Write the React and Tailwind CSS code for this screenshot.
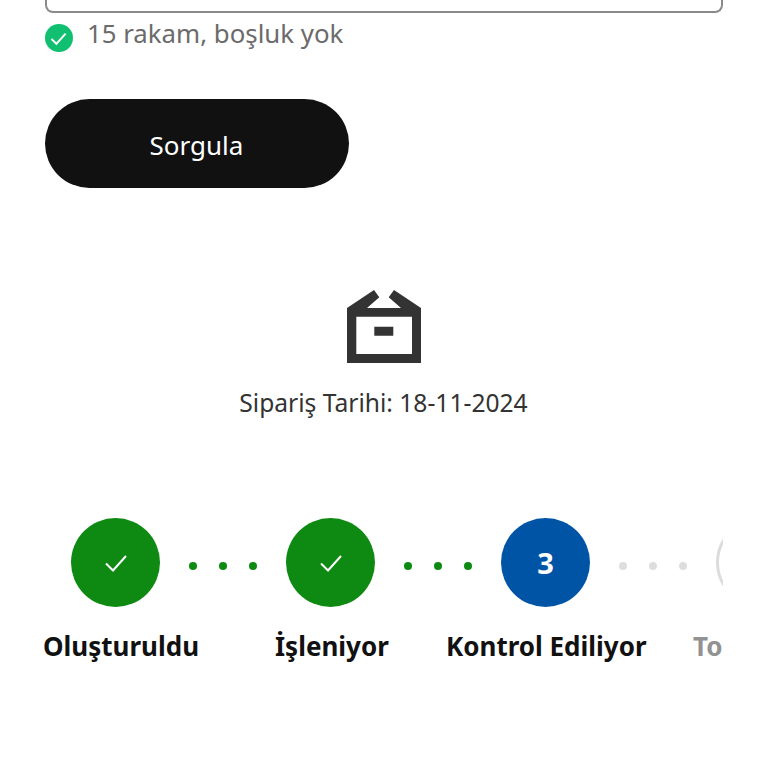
import React from 'react';

const FONT = { fontFamily: '"Noto Sans", sans-serif' };

const Check = ({ className, weight = 2 }) => (
  <svg className={className} viewBox="0 0 24 24" fill="none" stroke="currentColor" strokeWidth={weight}>
    <path d="M2 12.5l7 7L22 5" />
  </svg>
);

const Dots = ({ color }) => (
  <div className="w-[126px] shrink-0 flex items-center justify-center gap-[22px] pt-[7px]">
    <span className={`w-[8px] h-[8px] rounded-full ${color}`} />
    <span className={`w-[8px] h-[8px] rounded-full ${color}`} />
    <span className={`w-[8px] h-[8px] rounded-full ${color}`} />
  </div>
);

const DoneCircle = () => (
  <div className="w-[89px] h-[89px] shrink-0 rounded-full bg-[#0e8a12] text-white flex items-center justify-center">
    <Check className="w-[24px] h-[24px]" />
  </div>
);

export default function App() {
  return (
    <div className="min-h-[768px] bg-white" style={FONT}>
      <div className="pl-[44.5px]">
        {/* Input, only its lower edge is in view */}
        <div className="h-[13px] border-x-2 border-b-2 border-[#8a8a8a] rounded-b-[8px] w-[678px]" />

        <div className="flex items-start mt-[6px]">
          <div className="w-[28px] h-[28px] mt-[5px] rounded-full bg-[#10c070] text-white flex items-center justify-center">
            <Check className="w-[17px] h-[17px]" weight={2.8} />
          </div>
          <span className="ml-[14.5px] text-[25.8px] leading-[28px] text-[#6b6b6b]">15 rakam, boşluk yok</span>
        </div>

        <button className="mt-[46.5px] block w-[304px] h-[89px] pt-[4px] rounded-full bg-[#111111] text-white text-[26px]">
          Sorgula
        </button>

        <div className="mt-[102.5px] flex flex-col items-center w-[678px]">
          <svg className="w-[74px] h-[73px]" viewBox="0 0 74 73" fill="#333333" fillRule="evenodd">
            <path d="M27 0L32.3 7.3 20 18H54L41.7 7.3 47 0 74 18V73H0V18ZM9.3 26.7V64H65V26.7ZM27.3 36.7H46.3V45.7H27.3Z" />
          </svg>
          <p className="mt-[22px] text-[24.6px] leading-[36px] text-[#333333]">Sipariş Tarihi: 18-11-2024</p>
        </div>
      </div>

      {/* Stepper runs past the right edge */}
      <div className="ml-[43px] w-[680px] overflow-hidden mt-[97px]">
        <div className="flex pl-[28px] w-[1000px]">
          <DoneCircle />
          <Dots color="bg-[#0e8a12]" />
          <DoneCircle />
          <Dots color="bg-[#0e8a12]" />
          <div className="w-[89px] h-[89px] shrink-0 rounded-full bg-[#0054a6] text-white flex items-center justify-center text-[29px] font-bold">
            3
          </div>
          <Dots color="bg-[#dedede]" />
          <div className="w-[89px] h-[89px] shrink-0 rounded-full border-[3px] border-[#dcdcdc]" />
        </div>
        <div className="flex mt-[21px] text-[26px] leading-[36px] font-bold text-[#111111] whitespace-nowrap">
          <span className="w-[156px] shrink-0">Oluşturuldu</span>
          <span className="ml-[76px] w-[111px] shrink-0">İşleniyor</span>
          <span className="ml-[60px] w-[200px] shrink-0">Kontrol Ediliyor</span>
          <span className="ml-[47px] text-[#929292]">To</span>
        </div>
      </div>
    </div>
  );
}
